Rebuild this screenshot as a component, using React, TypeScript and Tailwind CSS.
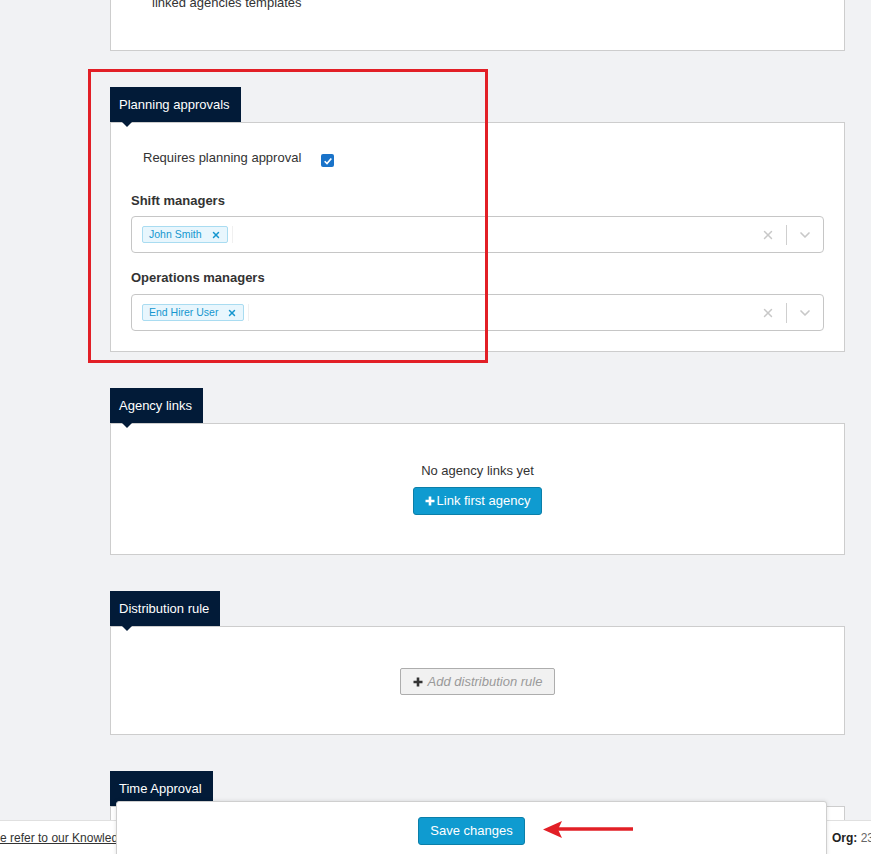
import { X, ChevronDown } from "lucide-react";

const font = { fontFamily: '"Liberation Sans", Arial, sans-serif' };

const SectionTab = ({ title }: { title: string }) => (
  <div className="relative inline-block bg-[#021b38] text-white text-[13px] h-[35px] leading-[35px] pl-[9px] pr-[11px]">
    {title}
    {/* little pointer under the tab */}
    <span className="absolute left-[12px] top-[35px] w-0 h-0 border-l-[5px] border-r-[5px] border-t-[5px] border-l-transparent border-r-transparent border-t-[#021b38] z-10" />
  </div>
);

const Tag = ({ label }: { label: string }) => (
  <span className="inline-flex items-center h-[17px] px-[6px] gap-[9px] bg-[#e8f6fd] border border-[#a9dcf1] rounded-[2px] text-[10.5px] text-[#1596cf]">
    {label}
    <X className="w-[10px] h-[10px]" strokeWidth={3.5} />
  </span>
);

const MultiSelect = ({ value }: { value: string }) => (
  <div className="flex items-center h-[37px] border border-[#c6c6c6] rounded-[4px] bg-white pl-[10px]">
    <div className="flex-1 flex items-center gap-[4px]">
      <Tag label={value} />
      <span className="w-px h-[17px] bg-[#f0f0f0]" />
    </div>
    <X className="w-[14px] h-[14px] text-[#c8c8c8] mr-[11px]" strokeWidth={2.5} />
    <span className="w-px h-[20px] bg-[#cfcfcf]" />
    <ChevronDown className="w-[16px] h-[16px] text-[#c8c8c8] mx-[10px]" strokeWidth={2.5} />
  </div>
);

export default function App() {
  return (
    <div
      className="relative h-[854px] overflow-hidden bg-[#f1f2f4] text-[#333] text-[13px]"
      style={font}
    >
      <div className="ml-[110px] w-[735px] flex flex-col gap-[36px] -mt-[30px]">
        {/* previous card (cut off) */}
        <div className="bg-white border border-[#cdcdcd] h-[81px] pl-[41px] pt-[22px]">
          linked agencies templates
        </div>

        {/* Planning approvals */}
        <div>
          <SectionTab title="Planning approvals" />
          <div className="bg-white border border-[#cdcdcd] px-[20px] pt-[26px] pb-[20px]">
            <label className="flex items-center ml-[12px] h-[18px]">
              <span>Requires planning approval</span>
              <span className="ml-[20px] mt-[5px] w-[13px] h-[13px] rounded-[2px] bg-[#1a73c9] flex items-center justify-center">
                <svg viewBox="0 0 12 12" className="w-[10px] h-[10px]">
                  <path d="M2 6.3 L4.8 9 L10 3" stroke="white" strokeWidth="2" fill="none" />
                </svg>
              </span>
            </label>
            <div className="font-bold mt-[25px] h-[18px] leading-[18px]">Shift managers</div>
            <div className="mt-[6px]">
              <MultiSelect value="John Smith" />
            </div>
            <div className="font-bold mt-[16px] h-[18px] leading-[18px]">Operations managers</div>
            <div className="mt-[7px]">
              <MultiSelect value="End Hirer User" />
            </div>
          </div>
        </div>

        {/* Agency links */}
        <div>
          <SectionTab title="Agency links" />
          <div className="bg-white border border-[#cdcdcd] h-[132px] flex flex-col items-center pt-[38px]">
            <div className="h-[18px] leading-[18px]">No agency links yet</div>
            <button className="mt-[7px] h-[28px] px-[11px] flex items-center gap-[2px] bg-[#0f9bd0] border border-[#0b7fa9] rounded-[3px] text-white text-[13px]">
              <svg viewBox="0 0 10 10" className="w-[10px] h-[10px]">
                <path d="M5 0.5 V9.5 M0.5 5 H9.5" stroke="white" strokeWidth="2.6" />
              </svg>
              Link first agency
            </button>
          </div>
        </div>

        {/* Distribution rule */}
        <div>
          <SectionTab title="Distribution rule" />
          <div className="bg-white border border-[#cdcdcd] h-[109px] flex flex-col items-center pt-[41px]">
            <button className="h-[27px] px-[12px] flex items-center gap-[5px] bg-[#f1f1f1] border border-[#adadad] rounded-[2px] text-[#9a9a9a] italic text-[13px]">
              <svg viewBox="0 0 10 10" className="w-[10px] h-[10px]">
                <path d="M5 0.5 V9.5 M0.5 5 H9.5" stroke="#333" strokeWidth="2.6" />
              </svg>
              Add distribution rule
            </button>
          </div>
        </div>

        {/* Time Approval */}
        <div>
          <SectionTab title="Time Approval" />
          <div className="bg-white border border-[#cdcdcd] h-[120px]" />
        </div>
      </div>

      {/* footer */}
      <div className="absolute left-0 right-0 top-[820px] bottom-0 bg-white border-t border-[#e0e0e0] flex items-center justify-between text-[12px] overflow-hidden z-20">
        <span className="-ml-[30px] underline text-[#333] whitespace-nowrap">
          Please refer to our Knowledge base
        </span>
        <span className="whitespace-nowrap mr-[-3px] pl-[4px]">
          <b className="text-[#222]">Org:</b> <span className="text-[#666]">23</span>
        </span>
      </div>

      {/* sticky save panel */}
      <div className="absolute z-30 left-[116px] w-[711px] top-[801px] h-[60px] bg-white border border-[#cfcfcf] rounded-t-[3px] shadow-[0_0_4px_rgba(0,0,0,0.12)] flex justify-center pt-[15px]">
        <button className="h-[28px] px-[11px] bg-[#0f9bd0] border border-[#0b7fa9] rounded-[3px] text-white text-[13px]">
          Save changes
        </button>
      </div>

      {/* annotation: red box */}
      <div className="absolute z-40 left-[88px] top-[69px] w-[400px] h-[294px] border-[3px] border-[#e21f26] pointer-events-none" />

      {/* annotation: red arrow */}
      <svg className="absolute z-40 left-[540px] top-[819px]" width="96" height="22" viewBox="0 0 96 22">
        <path d="M18 10 H93" stroke="#e21f26" strokeWidth="3.5" />
        <path d="M3 10.5 L22 2 L18 10.5 L22 19 Z" fill="#e21f26" />
      </svg>
    </div>
  );
}
